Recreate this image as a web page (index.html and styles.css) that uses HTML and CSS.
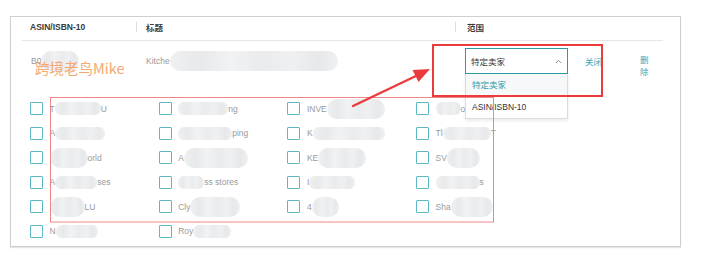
FILE: index.html
```html
<!DOCTYPE html>
<html lang="zh-CN">
<head>
    <meta charset="UTF-8">
    <meta name="viewport" content="width=device-width, initial-scale=1.0">
    <title>Brand Exclusions</title>
    <link rel="stylesheet" href="styles.css">
</head>
<body>
    <div class="page">
        <div class="card">
            <div class="thead">
                <div class="th th-asin">ASIN/ISBN-10</div>
                <div class="th th-title"><span class="sep"></span>标题</div>
                <div class="th th-scope"><span class="sep"></span>范围</div>
            </div>

            <div class="trow">
                <div class="td td-asin">B0<span class="blur w-38 tall"></span></div>
                <div class="td td-title">Kitche<span class="blur w-168 tall"></span></div>
                <div class="td td-scope">
                    <div class="select">
                        <span>特定卖家</span>
                        <svg class="caret" viewBox="0 0 8 5" fill="none">
                            <path d="M1 4.2L4 1.2L7 4.2" stroke="currentColor" stroke-width="1.1"/>
                        </svg>
                    </div>
                    <ul class="menu">
                        <li class="menu-item active">特定卖家</li>
                        <li class="menu-item">ASIN/ISBN-10</li>
                    </ul>
                </div>
                <div class="td td-close"><a href="#" class="link">关闭</a></div>
                <div class="td td-del"><a href="#" class="link">删<br>除</a></div>
            </div>

            <div class="sellers">
                <label class="seller"><span class="check"></span><span class="name">T<span class="blur w-46"></span>U</span></label>
                <label class="seller"><span class="check"></span><span class="name"><span class="blur w-50"></span>ng</span></label>
                <label class="seller"><span class="check"></span><span class="name">INVE<span class="blur w-58 tall"></span></span></label>
                <label class="seller"><span class="check"></span><span class="name"><span class="blur w-25"></span>o</span></label>

                <label class="seller"><span class="check"></span><span class="name">A<span class="blur w-50"></span></span></label>
                <label class="seller"><span class="check"></span><span class="name"><span class="blur w-54"></span>ping</span></label>
                <label class="seller"><span class="check"></span><span class="name">K<span class="blur w-72"></span></span></label>
                <label class="seller"><span class="check"></span><span class="name">Tl<span class="blur w-48"></span>T</span></label>

                <label class="seller"><span class="check"></span><span class="name"><span class="blur w-38 tall"></span>orld</span></label>
                <label class="seller"><span class="check"></span><span class="name">A<span class="blur w-64 tall"></span></span></label>
                <label class="seller"><span class="check"></span><span class="name">KE<span class="blur w-48 tall"></span></span></label>
                <label class="seller"><span class="check"></span><span class="name">SV<span class="blur w-33 tall"></span></span></label>

                <label class="seller"><span class="check"></span><span class="name">A<span class="blur w-42"></span>ses</span></label>
                <label class="seller"><span class="check"></span><span class="name"><span class="blur w-26"></span>ss stores</span></label>
                <label class="seller"><span class="check"></span><span class="name">I<span class="blur w-46"></span></span></label>
                <label class="seller"><span class="check"></span><span class="name"><span class="blur w-44"></span>s</span></label>

                <label class="seller"><span class="check"></span><span class="name"><span class="blur w-35 tall"></span>LU</span></label>
                <label class="seller"><span class="check"></span><span class="name">Cly<span class="blur w-50 tall"></span></span></label>
                <label class="seller"><span class="check"></span><span class="name">4<span class="blur w-27 tall"></span></span></label>
                <label class="seller"><span class="check"></span><span class="name">Sha<span class="blur w-42 tall"></span></span></label>

                <label class="seller"><span class="check"></span><span class="name">N<span class="blur w-42"></span></span></label>
                <label class="seller"><span class="check"></span><span class="name">Roy<span class="blur w-38"></span></span></label>
            </div>
        </div>

        <div class="watermark">跨境老鸟Mike</div>

        <!-- annotation layer drawn on top of the screenshot -->
        <svg class="annot" viewBox="0 0 704 256">
            <rect x="433" y="45" width="169" height="51" fill="none" stroke="#ec3b3d" stroke-width="2"/>
            <rect x="50.5" y="97.5" width="443" height="124.5" fill="none" stroke="#f08787" stroke-width="1"/>
            <line x1="353" y1="106" x2="418" y2="75" stroke="#ec3b3d" stroke-width="2.4" stroke-linecap="round"/>
            <polygon points="430,69 412.5,70 418.5,82" fill="#ec3b3d"/>
        </svg>
    </div>
</body>
</html>
```

FILE: styles.css
```css
:root {
    --text: #333333;
    --muted: #9a9a9a;
    --line: #e6e6e6;
    --teal: #2e9aa6;
    --teal-light: #3aa6b5;
    --check: #5cb9c4;
}

body {
    margin: 0;
    background-color: #ffffff;
    font-family: "Liberation Sans", Arial, "Noto Sans CJK SC", sans-serif;
    font-size: 8.5px;
    color: var(--text);
}

.page {
    position: relative;
    width: 704px;
    height: 256px;
    padding-top: 16px;
    box-sizing: border-box;
    overflow: hidden;
}

.card {
    margin-left: 10px;
    width: 669px;
    height: 229px;
    border: 1px solid #cfcfcf;
    box-shadow: 0 1px 1px rgba(0, 0, 0, 0.1);
    background-color: #ffffff;
}

/* table header */
.thead {
    display: flex;
    height: 24px;
    margin: 0 17px 0 11px;
    padding-bottom: 4px;
    box-sizing: border-box;
    align-items: center;
    border-bottom: 1px solid var(--line);
}

.th {
    display: flex;
    align-items: center;
    font-weight: bold;
    color: #3a3a3a;
}

.th-asin {
    width: 114px;
    padding-left: 8px;
    box-sizing: border-box;
}

.th-title {
    width: 319px;
    gap: 9px;
}

.th-scope {
    gap: 11px;
}

.sep {
    width: 1px;
    height: 10px;
    background-color: #dddddd;
}

/* data row */
.trow {
    display: flex;
    height: 33px;
    margin: 0 17px 0 11px;
    padding-top: 7px;
    box-sizing: border-box;
    align-items: flex-start;
}

.td {
    display: flex;
    align-items: center;
    height: 26px;
    color: var(--muted);
}

.td-asin {
    width: 114px;
    padding-left: 9px;
    box-sizing: border-box;
}

.td-title {
    width: 319px;
    padding-left: 10px;
    box-sizing: border-box;
}

.td-scope {
    position: relative;
    width: 130px;
    padding-left: 10px;
    box-sizing: border-box;
}

.td-close {
    width: 55px;
}

.td-del {
    align-items: flex-start;
    padding-top: 7px;
    box-sizing: border-box;
    line-height: 11.6px;
}

.link {
    color: var(--teal-light);
    text-decoration: none;
}

.select {
    display: flex;
    align-items: center;
    justify-content: space-between;
    width: 103px;
    height: 26px;
    padding: 0 5px 0 5px;
    box-sizing: border-box;
    border: 1px solid var(--teal);
    color: var(--text);
    background-color: #ffffff;
}

.caret {
    width: 7px;
    height: 5px;
    color: #8a8a8a;
}

.menu {
    position: absolute;
    top: 26px;
    left: 10px;
    width: 103px;
    margin: 0;
    padding: 0;
    list-style: none;
    box-sizing: border-box;
    background-color: #ffffff;
    border: 1px solid #dcdcdc;
    border-top: none;
    box-shadow: 0 2px 3px rgba(0, 0, 0, 0.08);
}

.menu-item {
    height: 22px;
    line-height: 22px;
    padding-left: 6px;
    color: var(--text);
}

.menu-item.active {
    color: var(--teal);
    background-color: #f6f8f9;
}

/* seller checkbox grid */
.sellers {
    display: grid;
    grid-template-columns: repeat(4, 128.7px);
    grid-auto-rows: 13px;
    row-gap: 11.6px;
    margin-top: 28px;
    padding-left: 19px;
}

.seller {
    display: flex;
    align-items: center;
    gap: 6.5px;
    color: var(--muted);
}

.check {
    flex: none;
    width: 13px;
    height: 13px;
    box-sizing: border-box;
    border: 1.5px solid var(--check);
    border-radius: 1px;
}

.name {
    display: flex;
    align-items: center;
    white-space: nowrap;
}

/* pixelated blur over hidden names */
.blur {
    display: inline-block;
    height: 13px;
    border-radius: 6px;
    background: linear-gradient(90deg, #eff0f2 0%, #e7e9eb 18%, #f1f2f3 36%, #e9ebed 55%, #eef0f1 72%, #e6e8ea 88%, #eff0f2 100%);
}

.blur.tall {
    height: 20px;
    border-radius: 10px;
}

.w-25 { width: 25px; }
.w-26 { width: 26px; }
.w-27 { width: 27px; }
.w-33 { width: 33px; }
.w-35 { width: 35px; }
.w-38 { width: 38px; }
.w-42 { width: 42px; }
.w-44 { width: 44px; }
.w-46 { width: 46px; }
.w-48 { width: 48px; }
.w-50 { width: 50px; }
.w-54 { width: 54px; }
.w-58 { width: 58px; }
.w-64 { width: 64px; }
.w-72 { width: 72px; }
.w-168 { width: 168px; }

.watermark {
    position: absolute;
    left: 35px;
    top: 60px;
    font-family: "Noto Sans CJK SC", "Liberation Sans", sans-serif;
    font-size: 14.5px;
    line-height: 15px;
    color: #f4a064;
    opacity: 0.9;
}

.annot {
    position: absolute;
    top: 0;
    left: 0;
    width: 704px;
    height: 256px;
    pointer-events: none;
}
```
